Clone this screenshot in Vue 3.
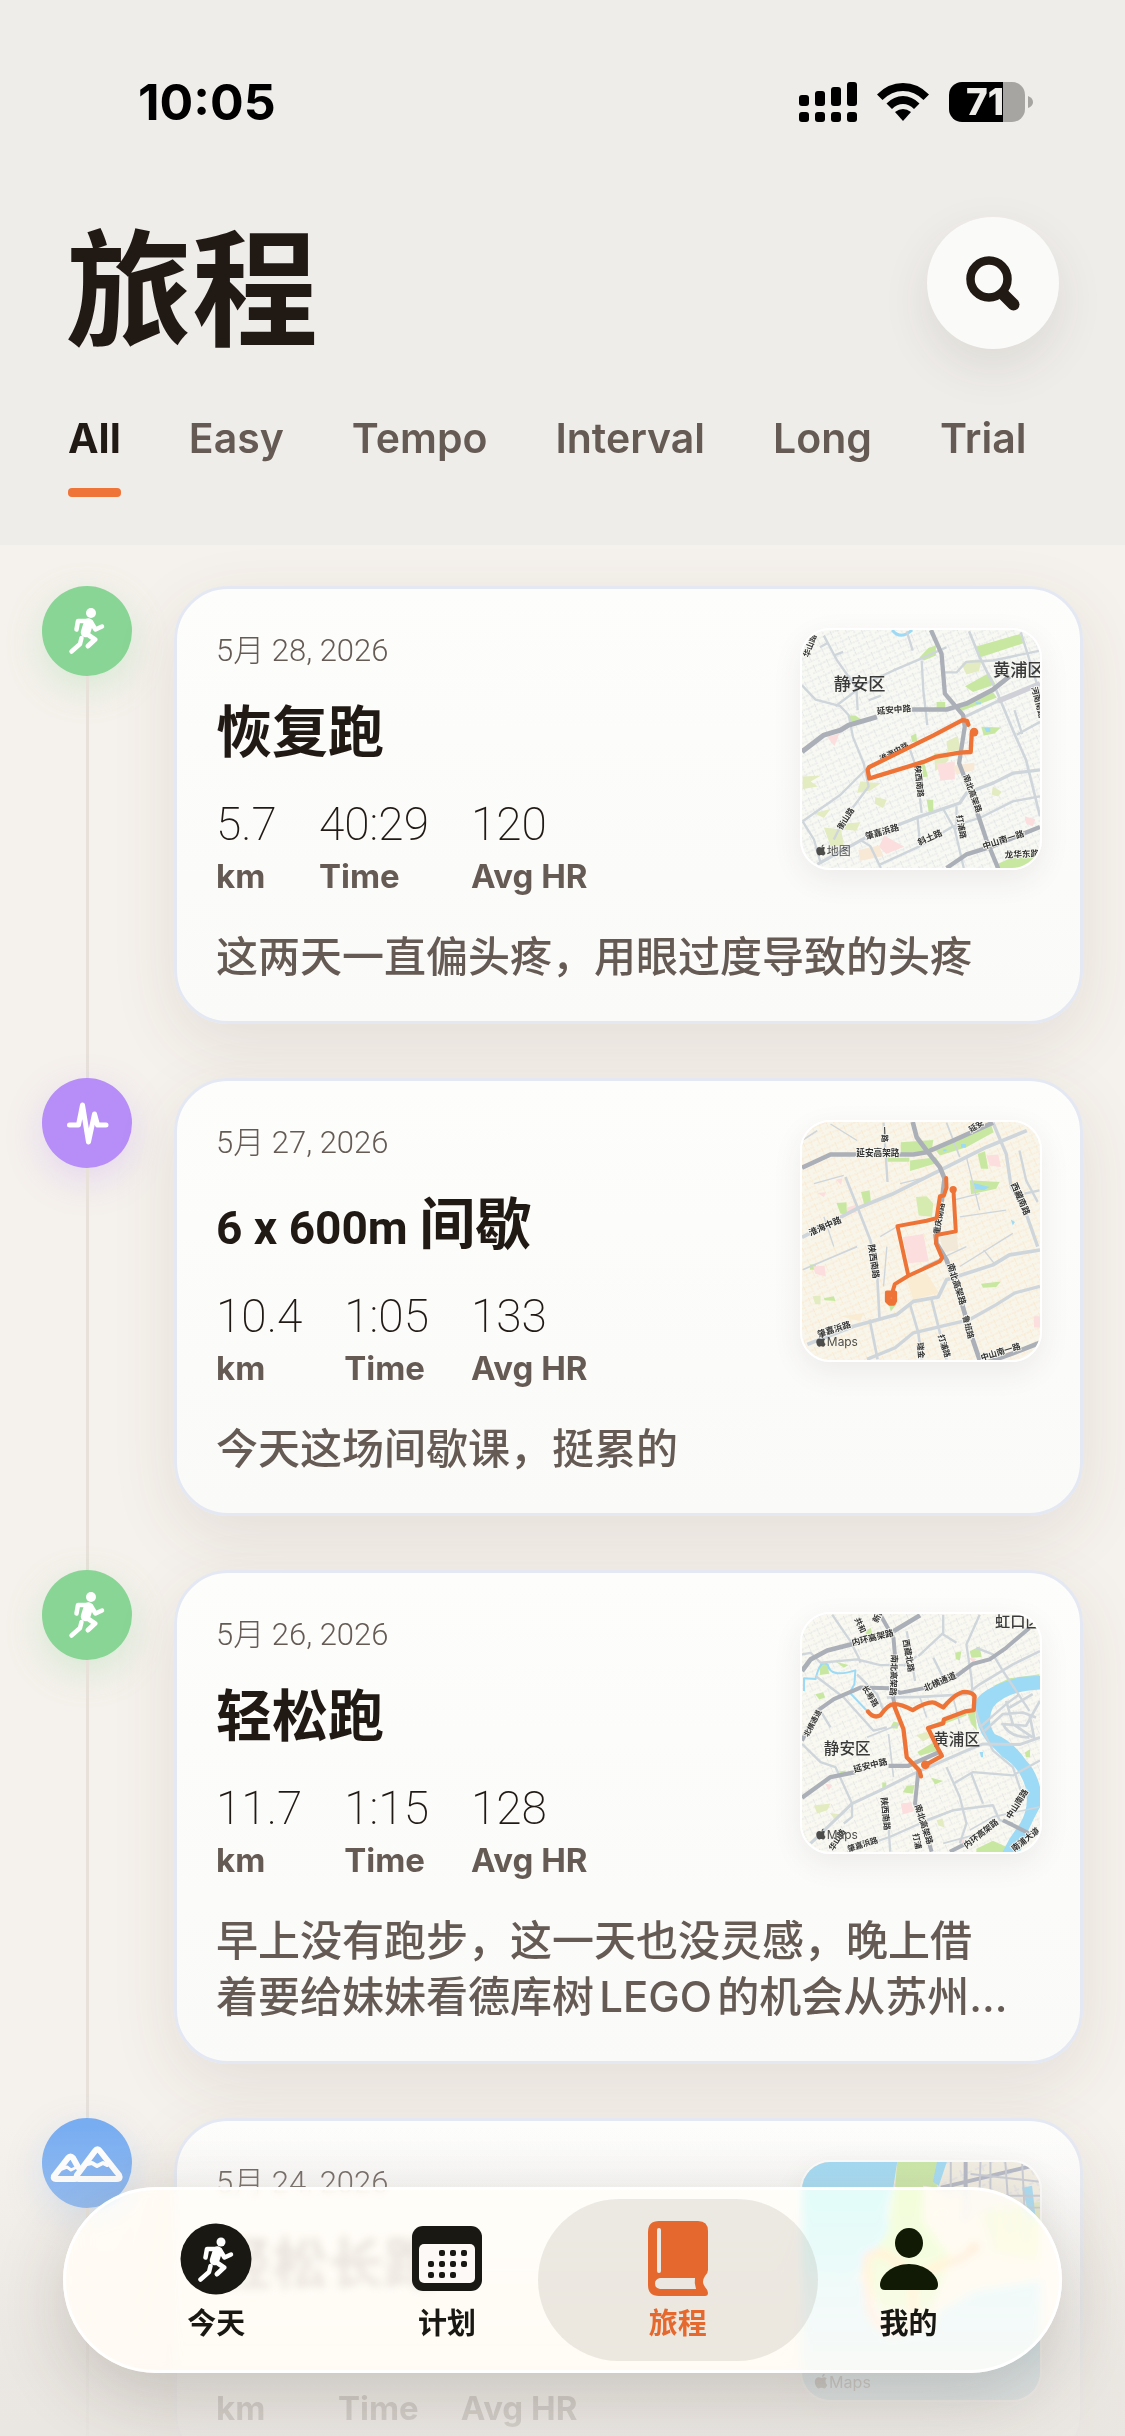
<template>
  <div class="app">
    <header class="header">
      <div class="status-bar">
        <span class="clock">10:05</span>
        <div class="status-icons">
          <svg width="58" height="40" viewBox="0 0 58 40" aria-hidden="true">
            <rect x="0" y="13" width="10" height="11" rx="3" />
            <rect x="16" y="9" width="10" height="15" rx="3" />
            <rect x="32" y="5" width="10" height="19" rx="3" />
            <rect x="48" y="0" width="10" height="24" rx="3" />
            <rect v-for="x in [0, 16, 32, 48]" :key="x" :x="x" y="30" width="10" height="10" rx="3" />
          </svg>
          <svg width="52" height="40" viewBox="0 0 52 40" aria-hidden="true">
            <path d="M0 12.500Q11 1 26 1T52 12.500L46.500 18Q37.500 9 26 9T5.500 18z" />
            <path d="M9.500 21.500Q17 14 26 14T42.500 21.500L37 27Q32 22 26 22T15 27z" />
            <path d="M18 30Q26 24 34 30L26 39z" />
          </svg>
          <svg width="84" height="40" viewBox="0 0 84 40" aria-label="71%">
            <path d="M54 0H63a13 13 0 0 1 13 13V27a13 13 0 0 1 -13 13H54z" fill="#a6a5a2" />
            <path d="M54 0H13a13 13 0 0 0 -13 13V27a13 13 0 0 0 13 13H54z" />
            <path d="M79 14q5 2 5 6t-5 6z" fill="#a6a5a2" />
            <text x="36" y="33" class="battery-text">71</text>
          </svg>
        </div>
      </div>

      <div class="title-row">
        <h1>旅程</h1>
        <button class="search-button" aria-label="Search">
          <svg width="60" height="60" viewBox="0 0 60 60" fill="none" stroke="#211a14" stroke-linecap="round" aria-hidden="true">
            <circle cx="26" cy="26" r="18.500" stroke-width="8.500" />
            <path d="M41 42L50.500 51.500" stroke-width="12" />
          </svg>
        </button>
      </div>

      <nav class="tabs">
        <button
          v-for="tab in tabs"
          :key="tab"
          class="tab"
          :class="{ active: tab === activeTab }"
          @click="activeTab = tab"
        >
          {{ tab }}
        </button>
      </nav>
    </header>

    <main class="feed">
      <article v-for="run in runs" :key="run.date" class="entry">
        <div class="rail">
          <div class="badge" :class="run.kind">
            <svg v-if="run.kind === 'easy'" class="runner" viewBox="0 0 90 90">
              <circle cx="49" cy="27" r="5" />
              <path v-for="limb in runner" :key="limb.d" :d="limb.d" :stroke-width="limb.w" />
            </svg>
            <svg v-else-if="run.kind === 'interval'" viewBox="0 0 90 90" fill="none" stroke="#fff" stroke-width="5" stroke-linecap="round" stroke-linejoin="round">
              <path d="M27.500 47H36.500L40.500 27L46.500 64L52.500 36L55.500 47H64" />
            </svg>
            <svg v-else viewBox="0 0 90 90" fill="none" stroke="#fff" stroke-width="6" stroke-linecap="round" stroke-linejoin="round">
              <path d="M36 49L31 40Q28.500 37 26 40L12 58Q11 61 14 61H33" />
              <path d="M20 51l5-2 4 3 4-2" stroke-width="3" />
              <path d="M53 33Q55.500 29.500 58 33L77 57Q79 61 75 61H37Q33 61 35 57z" />
              <path d="M45 46l5-1 5 3 6-3 4 2" stroke-width="4" />
            </svg>
          </div>
          <div class="line"></div>
        </div>

        <div class="card">
          <div class="card-top">
            <div class="summary">
              <time class="date">{{ run.date }}</time>
              <h2><span v-if="run.reps" class="reps">{{ run.reps }}&nbsp;</span>{{ run.title }}</h2>
              <div class="stats">
                <div v-for="stat in run.stats" :key="stat.label" class="stat" :class="{ pending: !stat.value }">
                  <span class="value">{{ stat.value }}</span>
                  <span class="label">{{ stat.label }}</span>
                </div>
              </div>
            </div>

            <svg class="map" :viewBox="run.map.view">
              <defs>
                <pattern :id="'grid-' + run.map.id" width="44" height="36" patternUnits="userSpaceOnUse" patternTransform="rotate(-24)">
                  <path d="M0 6H44M0 24H28M10 0V24M32 6V36" fill="none" :stroke="run.map.grid" stroke-width="2" stroke-dasharray="5 3" />
                </pattern>
              </defs>
              <rect width="900" height="900" :fill="run.map.land" />
              <rect width="900" height="900" :fill="'url(#grid-' + run.map.id + ')'" />
              <path v-for="a in run.map.areas" :key="a.d" :d="a.d" :fill="a.fill" />
              <g fill="none" stroke-linejoin="round">
                <path v-for="r in run.map.roads" :key="r.d" :d="r.d" :stroke="r.color" :stroke-width="r.w" />
              </g>
              <text
                v-for="l in run.map.labels"
                :key="l.text + l.x"
                :x="l.x"
                :y="l.y"
                :class="l.size > 30 ? 'district' : 'street'"
                :font-size="l.size"
                :transform="`rotate(${l.angle} ${l.x} ${l.y})`"
              >{{ l.text }}</text>
              <path class="route" :d="run.map.route" :stroke-width="run.map.routeWidth" />
              <circle v-if="run.map.end" :cx="run.map.end[0]" :cy="run.map.end[1]" :r="run.map.end[2]" fill="#ee7336" />
              <g :transform="run.map.markAt" fill="#4d4d4b">
                <path d="M26 17c0-4 3-5 3-5-2-3-5-3-6-3-2 0-4 1.500-6 1.500S13 9 11 9C6 9 2 13 2 19s4 15 9 15c2 0 3-1.500 6-1.500s4 1.500 6 1.500c4 0 6-5 7-8-3-1-4-5-4-9zM22 7c1-1 2-3 2-6-3 0-6 3-6 7 2 0 3 0 4-1z" />
                <text x="34" y="32" class="mark">{{ run.map.mark }}</text>
              </g>
            </svg>
          </div>
          <p v-if="run.note" class="note">{{ run.note }}</p>
        </div>
      </article>
    </main>

    <div class="veil"></div>

    <nav class="tab-bar">
      <a v-for="item in navItems" :key="item.id" href="#" class="nav-item" :class="{ current: item.id === 'journey' }">
        <span class="nav-icon">
          <svg v-if="item.id === 'today'" width="72" height="72" viewBox="9 9 72 72" class="runner">
            <circle cx="45" cy="45" r="35.500" class="disc" />
            <circle cx="50" cy="28" r="4.500" />
            <path v-for="limb in runner" :key="limb.d" :d="limb.d" :stroke-width="limb.w" />
          </svg>
          <svg v-else-if="item.id === 'plan'" width="72" height="66" viewBox="0 0 72 66">
            <rect x="1" y="0" width="70" height="65" rx="11" fill="#1a1813" />
            <rect x="8" y="18" width="56" height="39" rx="5" fill="#fdf9f6" />
            <rect v-for="(d, i) in calendarDots" :key="i" :x="d[0]" :y="d[1]" width="6" height="6" rx="2" fill="#1a1813" />
          </svg>
          <svg v-else-if="item.id === 'journey'" width="60" height="76" viewBox="0 0 60 76">
            <path fill="#e5692f" fill-rule="evenodd" d="M11 0H50Q60 0 60 10V49Q60 52 57 55Q53 61 57 66Q60 69 60 72Q60 75 57 75H11Q0 75 0 64V11Q0 0 11 0zM12 57Q7 58 7 62.500T12 68H48Q46 62 47 57z" />
            <rect x="9" y="7" width="4" height="45" rx="2" fill="#ece8e4" />
          </svg>
          <svg v-else width="60" height="64" viewBox="0 0 60 64" fill="#101a05">
            <ellipse cx="30" cy="16" rx="14" ry="15" />
            <path d="M1 58C1 48 14 37 30 37S59 48 59 58Q59 63 54 63H6Q1 63 1 58z" />
          </svg>
        </span>
        <span class="nav-label">{{ item.label }}</span>
      </a>
    </nav>
  </div>
</template>

<script setup>
import { ref } from 'vue'

const tabs = ['All', 'Easy', 'Tempo', 'Interval', 'Long', 'Trial']
const activeTab = ref('All')

const navItems = [
  { id: 'today', label: '今天' },
  { id: 'plan', label: '计划' },
  { id: 'journey', label: '旅程' },
  { id: 'me', label: '我的' }
]

const calendarDots = [
  [28, 24], [39, 24], [50, 24],
  [17, 35], [28, 35], [39, 35], [50, 35],
  [17, 46], [28, 46], [39, 46]
]

const runner = [
  { d: 'M46 35H36L34.500 43.500', w: 4.500 },
  { d: 'M46.500 37L43.500 46.500', w: 9.500 },
  { d: 'M49 36L53.500 43.500L60 40.500', w: 4.500 },
  { d: 'M43.500 47L53 53.500L46 60', w: 5 },
  { d: 'M39.500 52L38 58L29.500 65.500', w: 4.500 }
]

const green = '#c8e8a2'
const olive = '#e3ebc0'
const pink = '#fbdedd'
const water = '#9cdaf6'

const major = (d, w = 15) => ({ d, w, color: '#abafb7' })
const minor = (d, w = 7) => ({ d, w, color: '#ced5db' })
const fill = (d, color) => ({ d, fill: color })
const label = (text, x, y, angle = 0, size = 24) => ({ text, x, y, angle, size })

const recoveryMap = {
  id: 'recovery',
  view: '64 88 718 718',
  land: '#f8f9f3',
  grid: '#d3d7dc',
  mark: '地图',
  markAt: 'translate(105 734)',
  areas: [
    fill('M590 138L722 100L732 128L602 170z', green),
    fill('M556 258L628 218L648 252L580 275z', green),
    fill('M538 318L640 276L652 292L545 332z', green),
    fill('M418 172L445 142L468 135V165L432 180z', green),
    fill('M205 346H225L246 360L210 368z', green),
    fill('M605 380L664 382L645 400L612 406z', green),
    fill('M470 305H496V324H470z', green),
    fill('M392 408L408 400L412 424L396 426z', green),
    fill('M418 484L432 486L444 530L428 532z', green),
    fill('M440 600H460V636H446z', green),
    fill('M652 795L710 768L790 752V812H652z', green),
    fill('M545 190Q560 176 606 178L598 212L560 222z', olive),
    fill('M500 424L534 408L542 450L504 456z', olive),
    fill('M462 458H506V482L466 514z', olive),
    fill('M66 530L120 528L90 545L112 560L66 568z', olive),
    fill('M240 545L302 550L270 572L230 580z', olive),
    fill('M285 592L320 600L308 625L284 612z', olive),
    fill('M100 640L150 628L130 655z', olive),
    fill('M130 684L182 690L190 738L150 740z', olive),
    fill('M196 672L240 668L228 694L190 690z', olive),
    fill('M640 560L666 576L656 590L636 584z', olive),
    fill('M470 490L525 486V538L482 542z', pink),
    fill('M312 708L372 742L318 764L296 742z', pink),
    fill('M140 410L176 402L162 438z', pink),
    fill('M736 650L768 660L760 680L740 672z', pink),
    fill('M234 752L296 738L310 770L240 784z', '#f8e8d6'),
    fill('M520 498L584 488V510L530 524z', '#f8e8d6'),
    fill('M588 306H604V312H588zM614 384H632V396H620z', water)
  ],
  roads: [
    { d: 'M336 88Q362 120 396 88', w: 9, color: water },
    minor('M64 255L105 298L180 318L205 345L218 412L250 490L265 560L190 660L160 720'),
    minor('M130 105L170 180L228 262L232 330'),
    minor('M66 665L180 585L260 505'),
    minor('M66 665L100 720L120 790'),
    minor('M110 795L260 712L400 658L540 610L560 580L640 550L700 520L782 510', 10),
    minor('M300 795L420 740L520 680L600 655L700 605L782 590'),
    minor('M380 92L398 150M425 180L430 270L442 375'),
    minor('M165 318L255 250L340 210L420 176L500 140'),
    minor('M160 165L188 154M265 300L302 286M118 140L140 128'),
    minor('M568 92L600 170L650 270L700 390L740 480L782 650', 8),
    minor('M495 216H530L560 184L640 180L782 150'),
    minor('M724 95L760 210L782 280M705 330L728 402M712 404L782 365'),
    minor('M390 450L408 500L425 640M412 650L418 712'),
    minor('M490 628L525 690L552 806M530 620V690'),
    minor('M238 720L270 740L302 806'),
    minor('M555 350L660 300', 9),
    { d: 'M655 302L700 284L782 250', w: 16, color: '#cfd0d8' },
    major('M64 455L130 405L180 390L205 375L290 350'),
    major('M395 328H500L560 310L640 268L690 228', 14),
    major('M453 88L485 160L495 280L550 345L555 380L538 490L580 600L620 720L656 808', 13),
    major('M500 806L560 765L640 740L782 682', 13)
  ],
  labels: [
    label('静安区', 160, 268, 0, 52),
    label('黄浦区', 640, 228, 0, 52),
    label('延安中路', 290, 342, -5, 26),
    label('淮海中路', 304, 486, -28),
    label('陕西南路', 404, 498, 84),
    label('南北高架路', 550, 528, 70),
    label('衡山路', 184, 692, -58),
    label('肇嘉浜路', 258, 720, -16, 26),
    label('斜土路', 418, 738, -24, 26),
    label('打浦路', 530, 648, 80),
    label('中山南一路', 612, 750, -18, 26),
    label('龙华东路', 676, 776, -3, 26),
    label('河南南路', 756, 262, 75),
    label('华山路', 84, 172, -70)
  ],
  route: 'M566 374L562 362L548 360L462 405L266 502L262 510L267 536L300 526L430 486L470 470L540 458L573 456L576 400',
  routeWidth: 13,
  end: [583, 396, 13]
}

const intervalMap = {
  id: 'interval',
  view: '64 64 718 718',
  land: '#f8f5eb',
  grid: '#fae0b8',
  mark: 'Maps',
  markAt: 'translate(105 708)',
  areas: [
    fill('M362 125L460 118L455 150L362 160z', green),
    fill('M322 172H388V184H322z', green),
    fill('M390 180L468 170L478 186L390 212z', green),
    fill('M468 150L590 95L634 70L642 95L560 140L480 165z', green),
    fill('M594 160L616 152L626 205H604z', green),
    fill('M570 240L660 245L650 265L574 282z', green),
    fill('M242 275L268 270L272 305L252 315z', green),
    fill('M168 308L198 306L200 345L180 340z', green),
    fill('M408 290L440 288L460 310L456 350L416 346z', '#d5ebb0'),
    fill('M604 552L664 545L650 562L610 564z', green),
    fill('M88 494H106V510H88zM130 596L160 590L165 604L132 602z', green),
    fill('M322 600L350 612L332 636z', green),
    fill('M96 590L120 588V614H104z', olive),
    fill('M368 412L430 402L446 484L386 490z', pink),
    fill('M620 165L656 162L664 200L630 195z', pink),
    fill('M98 500L132 498L136 530L104 522z', pink),
    fill('M166 238L186 234L182 254zM110 278L136 276L130 290z', pink),
    fill('M200 322L228 314V338H200z', pink),
    fill('M764 650H782V684H764z', pink),
    fill('M376 530L440 520L478 580L400 600z', '#faecd3'),
    fill('M480 412L530 400L536 450L490 458z', '#f3e9d8'),
    fill('M180 650L250 640L240 665z', '#faecd3'),
    fill('M582 248L630 260L612 270L586 266zM544 130H558V142H544zM694 358L706 366L700 376zM490 146H500V152H490z', water)
  ],
  roads: [
    minor('M64 412L230 325L335 282L480 210L620 140L742 90', 11),
    minor('M80 735L220 680L350 645L400 605L475 592L500 540L640 495L690 465L782 450', 11),
    minor('M260 780L345 745L400 700L570 660L650 615L705 580L782 560', 10),
    minor('M195 230L235 330L270 420L290 510L298 660', 8),
    minor('M268 660L292 780M390 615L415 700L425 780M455 600L475 680L500 780', 8),
    minor('M310 66L322 245', 7),
    minor('M640 66L680 160L695 260L740 340L775 440', 10),
    minor('M720 150L740 240L775 305M735 280L780 270', 7),
    minor('M500 66L540 170M64 120L110 90M66 510L160 470L230 440', 5),
    minor('M612 450L645 492M360 250L440 230M300 410L350 380M520 300L600 280M540 350L680 330', 4),
    minor('M150 70L230 120M100 250L190 225M130 350L160 440M320 440L310 560M540 500L700 400M560 170L600 330M430 500L560 440', 4),
    major('M64 202L150 162H400L440 155L520 120L640 66', 14),
    major('M398 64L410 110L440 150L480 200L494 235L486 300L466 400L470 430L500 480L540 590L572 700L600 782', 14),
    major('M620 790L700 762L782 730', 14)
  ],
  labels: [
    label('延安高架路', 228, 168, 0, 26),
    label('延安', 574, 96, -32),
    label('一路', 304, 78, 88),
    label('淮海中路', 90, 408, -24, 26),
    label('陕西南路', 264, 434, 82, 26),
    label('重庆南路', 478, 404, -80, 24),
    label('南北高架路', 502, 494, 72, 26),
    label('鲁班路', 548, 650, 75, 24),
    label('西藏南路', 694, 252, 66, 26),
    label('肇嘉浜路', 114, 714, -18, 26),
    label('瑞金', 412, 730, 85),
    label('打浦路', 474, 708, 72),
    label('中山南一路', 606, 784, -17, 25)
  ],
  route: 'M499 233L500 262L492 286L480 288L470 354L440 362L352 378L385 528L344 553L336 580M385 528L480 484L487 474L468 430L470 405L528 394L521 272M320 578H345V604L340 612H328L320 604zM326 588H340V602H326z',
  routeWidth: 12,
  end: [520, 268, 11]
}

const easyMap = {
  id: 'easy',
  view: '64 68 718 718',
  land: '#faf9f1',
  grid: '#d6dade',
  mark: 'Maps',
  markAt: 'translate(105 714)',
  areas: [
    fill('M255 118L272 110L276 132L258 134z', green),
    fill('M166 212L205 222L190 230z', green),
    fill('M118 218L140 214L146 248L118 252z', green),
    fill('M526 185L545 180L540 208L528 204z', green),
    fill('M570 180L600 165L606 198L575 200z', green),
    fill('M644 284L690 262L780 250V268L650 296z', green),
    fill('M560 360L585 350L592 420L575 400z', green),
    fill('M450 404L560 358V374L470 408z', green),
    fill('M412 484L470 450L478 478L420 496z', green),
    fill('M340 392L358 396L352 414L330 412z', green),
    fill('M104 310L128 304L134 320L116 326z', green),
    fill('M170 544L196 540L194 552z', green),
    fill('M454 562L490 572L465 582z', green),
    fill('M736 486L752 476V500H740z', green),
    fill('M380 586L404 584L398 610L368 606z', green),
    fill('M306 576H318V592H306z', green),
    fill('M590 776L640 752L680 770L672 788H590z', green),
    fill('M408 434L440 424L452 440L430 452z', olive),
    fill('M100 646L150 640L140 660L110 670z', olive),
    fill('M148 668L180 672L165 690z', olive),
    fill('M470 690L488 686L494 712L476 706z', olive),
    fill('M362 640L394 636L400 664L368 672z', pink),
    fill('M134 580L155 584L145 600zM540 744H554V758H540zM566 200L590 204L580 214z', pink),
    fill('M782 254L720 258Q620 285 590 325Q580 400 620 450L670 500Q720 530 738 590Q752 650 722 700Q690 740 668 788H722Q738 730 782 650V590Q770 540 740 510Q700 450 645 430Q620 390 640 350Q680 300 782 296z', water),
    fill('M600 484H610V500H604z', water)
  ],
  roads: [
    { d: 'M70 300V262L105 264Q120 200 142 222Q150 262 225 238L222 280L208 305L262 362', w: 6, color: water },
    minor('M155 70L210 150L235 200L240 215M64 190L90 185L120 215L230 205L300 222H370'),
    minor('M415 195L490 125M490 70V130L530 155M410 195L370 225'),
    minor('M380 120L405 270M460 200L490 260M230 250L290 310L310 360'),
    minor('M600 70L560 160L575 260L580 330L600 400L640 480L700 530L724 600'),
    minor('M105 255L190 320L280 420L320 410M120 360L150 410'),
    minor('M64 460L120 515L165 530L215 640V680L190 700'),
    minor('M90 760L215 640L300 600L400 550L560 480L610 460L720 462L782 440', 9),
    minor('M320 320L420 318L560 310L600 280L700 220L782 180', 8),
    minor('M590 170L640 190L670 240L750 360M600 410L680 340L720 310'),
    minor('M500 530L540 620L560 700L540 760M520 580L580 545L700 555L782 510'),
    minor('M575 550L610 640M440 690L520 660L640 645L660 690L700 700'),
    minor('M200 785L330 740L420 700L520 660M320 630L330 785'),
    minor('M260 440L360 400M325 430L340 560M570 720L640 680L782 650M490 760L600 730M420 320L440 380M520 320L540 400', 5),
    minor('M615 420L670 370L730 365L770 380M680 330L700 400L760 440M665 400L740 405L782 330M690 350L760 310M750 370L765 445M670 400Q690 440 750 440', 8),
    major('M64 240L90 205L140 178L220 158L340 120L420 72', 14),
    major('M64 450L110 360L160 325L240 290L330 292L360 306L440 290L520 262L580 218L630 205L680 170L750 110', 12),
    major('M300 70L340 140L345 200L335 300L345 350', 12),
    major('M64 622L150 560L225 545M325 526H385L475 486', 13),
    major('M415 540L405 640L430 700L455 785M670 690L750 730', 12),
    major('M510 785L560 760', 12)
  ],
  labels: [
    label('静安区', 130, 490, 0, 47),
    label('黄浦区', 460, 462, 0, 47),
    label('虹口区', 646, 108, 0, 46),
    label('内环高架路', 216, 164, -14, 26),
    label('西藏北路', 368, 146, 80, 25),
    label('南北高架路', 334, 190, 92, 25),
    label('长寿路', 244, 290, 58),
    label('北横通道', 436, 302, -24, 26),
    label('北横通道', 82, 440, -62, 22),
    label('延安中路', 222, 546, -14, 26),
    label('陕西南路', 302, 622, 84, 25),
    label('南北高架路', 404, 646, 72, 25),
    label('内环高架路', 560, 776, -38, 25),
    label('中山南路', 694, 688, -58, 25),
    label('共和', 222, 84, 65),
    label('新路', 292, 96, -65),
    label('肇嘉浜路', 204, 786, -18, 24),
    label('打浦', 398, 732, 78),
    label('南浦大道', 704, 786, -38, 25),
    label('华山路', 158, 784, -58)
  ],
  route: 'M263 362Q280 384 300 374Q325 340 340 340Q360 338 398 358Q445 330 465 336L490 350Q530 304 555 303Q590 306 584 324L582 358L556 362L492 386L490 398L444 412L472 470L486 496L440 522M340 340L370 415L380 500L418 540L423 558',
  routeWidth: 13,
  end: [436, 523, 13]
}

const longMap = {
  id: 'long',
  view: '0 0 240 240',
  land: '#f3efe3',
  grid: '#e6e6e6',
  mark: 'Maps',
  markAt: 'translate(12 213) scale(.45)',
  areas: [
    fill('M0 0H96L92 26Q82 50 88 70L70 110L0 130z', water),
    fill('M96 0H136V26L122 24V60L150 96L130 150L80 150L60 110L86 70L94 24z', green),
    fill('M180 50L240 40V100L190 90z', olive),
    fill('M136 0L146 0L138 24L132 20z', water),
    fill('M0 110L60 118L84 170H130L140 150L176 130L240 120V240H0z', '#a9d9ef'),
    fill('M222 26L232 24L236 60L228 50z', water)
  ],
  roads: [
    { d: 'M140 26L165 20L240 2M165 0V60', w: 4, color: '#aeb3c2' },
    { d: 'M150 0V40M180 0L178 60M190 0V90M205 0L210 70M222 0L226 80M135 30L165 28M170 34H240M165 46H240M170 12L240 20', w: 2, color: '#c4c8d2' }
  ],
  labels: [],
  route: 'M174 86L160 98L140 104L112 118Q80 80 64 96L68 150Q90 190 112 160V118',
  routeWidth: 4,
  end: [174, 86, 4]
}

const runs = [
  {
    date: '5月 28, 2026',
    title: '恢复跑',
    kind: 'easy',
    stats: [
      { value: '5.7', label: 'km' },
      { value: '40:29', label: 'Time' },
      { value: '120', label: 'Avg HR' }
    ],
    note: '这两天一直偏头疼，用眼过度导致的头疼',
    map: recoveryMap
  },
  {
    date: '5月 27, 2026',
    reps: '6 x 600m',
    title: '间歇',
    kind: 'interval',
    stats: [
      { value: '10.4', label: 'km' },
      { value: '1:05', label: 'Time' },
      { value: '133', label: 'Avg HR' }
    ],
    note: '今天这场间歇课，挺累的',
    map: intervalMap
  },
  {
    date: '5月 26, 2026',
    title: '轻松跑',
    kind: 'easy',
    stats: [
      { value: '11.7', label: 'km' },
      { value: '1:15', label: 'Time' },
      { value: '128', label: 'Avg HR' }
    ],
    note: '早上没有跑步，这一天也没灵感，晚上借\n着要给妹妹看德库树LEGO的机会从苏州...',
    map: easyMap
  },
  {
    date: '5月 24, 2026',
    title: '轻松长跑',
    kind: 'long',
    stats: [
      { value: '', label: 'km' },
      { value: '', label: 'Time' },
      { value: '', label: 'Avg HR' }
    ],
    note: '',
    map: longMap
  }
]
</script>

<style>
body {
  margin: 0;
  background: #f5f1ec;
}
</style>

<style scoped>
.app {
  display: flex;
  flex-direction: column;
  height: 100vh;
  overflow: hidden;
  position: relative;
  background: #f5f1ec;
  color: #211a14;
  font-family: Inter, 'Noto Sans CJK SC', sans-serif;
}

button {
  border: none;
  padding: 0;
  background: none;
  font-family: inherit;
  color: inherit;
  cursor: pointer;
}

.header {
  flex: none;
  padding: 72px 66px 48px;
  background: #efedea;
}

.status-bar {
  display: flex;
  align-items: center;
  justify-content: space-between;
  height: 60px;
  padding: 0 26px 0 72px;
}

.clock {
  font-size: 50px;
  font-weight: 700;
  color: #000;
}

.status-icons {
  display: flex;
  gap: 20px;
}

.battery-text {
  font-size: 37px;
  font-weight: 800;
  text-anchor: middle;
  fill: #efedea;
}

.title-row {
  display: flex;
  align-items: center;
  justify-content: space-between;
  margin-top: 85px;
}

h1 {
  margin: 14px 0 0;
  font-size: 126px;
  line-height: 118px;
  font-weight: 700;
}

.search-button {
  display: flex;
  align-items: center;
  justify-content: center;
  width: 132px;
  height: 132px;
  border-radius: 50%;
  background: #fafaf9;
  box-shadow: 0 18px 48px rgba(60, 45, 30, 0.1);
}

.tabs {
  display: flex;
  gap: 68px;
  margin-top: 62px;
  padding: 0 2px;
}

.tab {
  padding-bottom: 32px;
  font-size: 41px;
  line-height: 54px;
  font-weight: 600;
  color: #655b54;
  position: relative;
}

.tab.active {
  font-weight: 700;
  color: #211a14;
}

.tab.active::after {
  content: '';
  position: absolute;
  left: 0;
  right: 0;
  bottom: 0;
  height: 9px;
  border-radius: 4px;
  background: #ee7437;
}

.feed {
  flex: 1;
  min-height: 0;
  overflow-y: auto;
  scrollbar-width: none;
  padding: 41px 42px 0;
}

.entry {
  display: flex;
  gap: 42px;
}

.rail {
  flex: none;
  display: flex;
  flex-direction: column;
  align-items: center;
  width: 90px;
}

.badge {
  flex: none;
  width: 90px;
  height: 90px;
  border-radius: 50%;
}

.badge svg {
  display: block;
}

.badge.easy {
  background: #89d595;
  box-shadow: 0 12px 36px rgba(137, 213, 149, 0.28);
}

.badge.interval {
  background: #b78df8;
  box-shadow: 0 12px 36px rgba(183, 141, 248, 0.26);
}

.badge.long {
  background: #78adf2;
  box-shadow: 0 12px 36px rgba(120, 173, 242, 0.26);
}

.runner {
  fill: #fff;
}

.runner path {
  fill: none;
  stroke: #fff;
  stroke-linecap: round;
  stroke-linejoin: round;
}

.runner .disc {
  fill: #1a1813;
}

.line {
  flex: 1;
  width: 3px;
  background: #e7e1da;
}

.card {
  flex: 1;
  min-width: 0;
  margin-bottom: 54px;
  padding: 39px 38px 36px 39px;
  border: 3px solid #e4e8f2;
  border-radius: 54px;
  background: linear-gradient(#fdfdfc, #fafaf9);
  box-shadow: 0 20px 66px rgba(90, 70, 40, 0.1);
}

.card-top {
  display: flex;
  align-items: flex-start;
  justify-content: space-between;
}

.date {
  display: block;
  font-family: Roboto, 'Noto Sans CJK SC', sans-serif;
  font-size: 31px;
  line-height: 46px;
  font-weight: 300;
  color: #655b54;
}

h2 {
  margin: 20px 0 34px;
  font-family: 'Noto Sans CJK SC', sans-serif;
  font-size: 56px;
  line-height: 68px;
  font-weight: 700;
}

.reps {
  font-family: Roboto, sans-serif;
  font-size: 46px;
  line-height: 1;
}

.stats {
  display: flex;
  gap: 42px;
}

.stat {
  display: flex;
  flex-direction: column;
  gap: 4px;
}

.stat.pending {
  min-width: 80px;
}

.value {
  height: 56px;
  font-family: Roboto, sans-serif;
  font-size: 46px;
  line-height: 56px;
  font-weight: 200;
}

.label {
  font-size: 33px;
  line-height: 40px;
  font-weight: 700;
  color: #655b54;
}

.map {
  flex: none;
  box-sizing: border-box;
  width: 242px;
  height: 242px;
  border: 2px solid #fff;
  border-radius: 30px;
  box-shadow: 0 10px 30px rgba(60, 50, 40, 0.08);
}

.map text {
  font-family: Inter, 'Noto Sans CJK SC', sans-serif;
}

.district {
  font-weight: 500;
  fill: #3a3a3a;
}

.street {
  font-weight: 700;
  fill: #333;
  stroke: #f8f8f3;
  stroke-width: 5px;
  paint-order: stroke;
}

.mark {
  font-size: 36px;
}

.route {
  fill: none;
  stroke: #ee7336;
  stroke-linejoin: round;
  stroke-linecap: round;
}

.note {
  margin: 33px 0 0;
  font-size: 42px;
  line-height: 56px;
  font-weight: 500;
  color: #655b54;
  white-space: pre-line;
  text-autospace: normal;
}

.veil {
  position: absolute;
  left: 0;
  right: 0;
  bottom: 0;
  height: 310px;
  pointer-events: none;
  background: linear-gradient(rgba(232, 228, 223, 0), rgba(232, 228, 223, 0.8) 80%, rgba(232, 228, 223, 0.85));
}

.tab-bar {
  position: absolute;
  left: 63px;
  right: 63px;
  bottom: 63px;
  box-sizing: border-box;
  display: flex;
  padding: 31px 35px 28px;
  border: 3px solid #fff;
  border-radius: 93px;
  background: rgba(255, 252, 248, 0.82);
  backdrop-filter: blur(4px) saturate(3) brightness(1.04);
  box-shadow: 0 24px 72px rgba(60, 50, 40, 0.2);
}

.nav-item {
  flex: 1;
  display: flex;
  flex-direction: column;
  align-items: center;
  gap: 8px;
  position: relative;
  color: #1a1813;
  text-decoration: none;
}

.nav-item.current {
  color: #e5692f;
}

.nav-item.current::before {
  content: '';
  position: absolute;
  inset: -22px -25px -19px;
  border-radius: 81px;
  background: rgba(120, 110, 95, 0.14);
}

.nav-icon {
  display: flex;
  align-items: center;
  justify-content: center;
  height: 76px;
  position: relative;
}

.nav-label {
  font-size: 29px;
  line-height: 37px;
  font-weight: 700;
  position: relative;
}
</style>
